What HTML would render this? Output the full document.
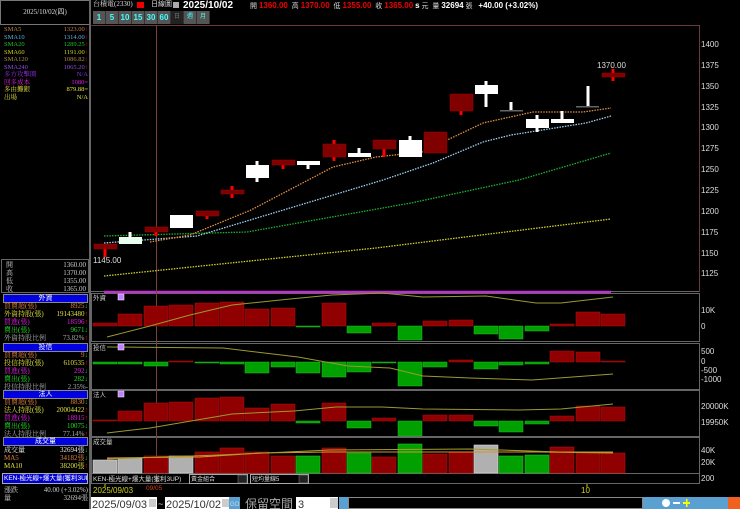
<!DOCTYPE html>
<html><head><meta charset="utf-8">
<style>
*{margin:0;padding:0;box-sizing:border-box}
body{width:740px;height:509px;background:#000;overflow:hidden;position:relative;font-family:"Liberation Sans","Noto Sans CJK TC",sans-serif;font-size:7px;color:#ddd}
.a{position:absolute;white-space:nowrap;line-height:9px}
.r{position:absolute;left:4px;right:2px;height:8px;font-size:7px;line-height:8px;font-family:"Liberation Serif","Noto Serif CJK SC",serif;white-space:nowrap}
.r span{position:absolute;right:0}
.m .r{height:7.5px;line-height:7.5px;font-size:6.5px}
.hd{position:absolute;left:3px;width:85px;height:9px;background:#0000e0;border:1px solid #888;color:#fff;text-align:center;font-size:7px;line-height:8px}
.box{position:absolute;left:1px;width:88px;border:1px solid #666}
.btn{position:absolute;top:11px;height:13px;width:13px;background:#555;color:#4ff;font-weight:bold;font-size:8px;line-height:13px;text-align:center;border-right:1px solid #333}
svg text{font-family:"Liberation Sans","Noto Sans CJK TC",sans-serif}
</style></head><body>
<!-- left panel -->
<div class="a" style="left:0;top:0;width:90px;height:25px;border:1px solid #777;text-align:center;line-height:23px;font-family:'Liberation Serif',serif;font-size:7px;color:#ddd">2025/10/02(四)</div>
<div style="position:absolute;left:89px;top:0;width:2px;height:509px;background:#666"></div>
<div class="m" style="position:absolute;left:0;top:26px;width:90px">
<div class="r" style="top:0;color:#c08040">SMA5<span>1323.00<b style="color:#f00">↑</b></span></div>
<div class="r" style="top:7.5px;color:#60b0e0">SMA10<span>1314.00<b style="color:#f00">↑</b></span></div>
<div class="r" style="top:15px;color:#20c020">SMA20<span>1289.25<b style="color:#f00">↑</b></span></div>
<div class="r" style="top:22.5px;color:#d0d020">SMA60<span>1191.00<b style="color:#f00">↑</b></span></div>
<div class="r" style="top:30px;color:#b08850">SMA120<span>1086.82<b style="color:#f00">↑</b></span></div>
<div class="r" style="top:37.5px;color:#9050e0">SMA240<span>1065.20<b style="color:#f00">↑</b></span></div>
<div class="r" style="top:45px;color:#9030e0">多方攻擊圈<span>N/A</span></div>
<div class="r" style="top:52.5px;color:#e020e0">回多成本<span>1080=</span></div>
<div class="r" style="top:60px;color:#e0e040">多由攤銀<span>879.88=</span></div>
<div class="r" style="top:67.5px;color:#e0e040">出場<span>N/A</span></div>
</div>
<div class="box" style="top:259px;height:34px">
<div class="r" style="top:1px;color:#ccc">開<span>1360.00</span></div>
<div class="r" style="top:9px;color:#ccc">高<span>1370.00</span></div>
<div class="r" style="top:17px;color:#ccc">低<span>1355.00</span></div>
<div class="r" style="top:25px;color:#ccc">收<span>1365.00</span></div>
</div>
<div class="hd" style="top:294px">外資</div>
<div style="position:absolute;left:0;top:302px;width:90px">
<div class="r" style="top:0;color:#e08040">買賣超(張)<span>8925<b style="color:#0c0">↓</b></span></div>
<div class="r" style="top:8px;color:#e0e040">外資持股(張)<span>19143480<b style="color:#f00">↑</b></span></div>
<div class="r" style="top:16px;color:#e020e0">買進(張)<span>18596<b style="color:#f00">↑</b></span></div>
<div class="r" style="top:24px;color:#20e020">賣出(張)<span>9671<b style="color:#0c0">↓</b></span></div>
<div class="r" style="top:32px;color:#aaa">外資持股比例<span>73.82%<b style="color:#f00">↑</b></span></div>
</div>
<div class="hd" style="top:343px">投信</div>
<div style="position:absolute;left:0;top:351px;width:90px">
<div class="r" style="top:0;color:#e08040">買賣超(張)<span>9<b style="color:#0c0">↓</b></span></div>
<div class="r" style="top:8px;color:#e0e040">投信持股(張)<span>610535<b style="color:#f00">↑</b></span></div>
<div class="r" style="top:16px;color:#e020e0">買進(張)<span>292<b style="color:#0c0">↓</b></span></div>
<div class="r" style="top:24px;color:#20e020">賣出(張)<span>282<b style="color:#0c0">↓</b></span></div>
<div class="r" style="top:32px;color:#aaa">投信持股比例<span>2.35%-</span></div>
</div>
<div class="hd" style="top:390px">法人</div>
<div style="position:absolute;left:0;top:398px;width:90px">
<div class="r" style="top:0;color:#e08040">買賣超(張)<span>8830<b style="color:#0c0">↓</b></span></div>
<div class="r" style="top:8px;color:#e0e040">法人持股(張)<span>20004422<b style="color:#f00">↑</b></span></div>
<div class="r" style="top:16px;color:#e020e0">買進(張)<span>18915<b style="color:#f00">↑</b></span></div>
<div class="r" style="top:24px;color:#20e020">賣出(張)<span>10075<b style="color:#0c0">↓</b></span></div>
<div class="r" style="top:32px;color:#aaa">法人持股比例<span>77.14%<b style="color:#f00">↑</b></span></div>
</div>
<div class="hd" style="top:437px">成交量</div>
<div style="position:absolute;left:0;top:446px;width:90px">
<div class="r" style="top:0;color:#eee">成交量<span>32694張<b style="color:#0c0">↓</b></span></div>
<div class="r" style="top:8px;color:#e08040">MA5<span>34182張<b style="color:#0c0">↓</b></span></div>
<div class="r" style="top:16px;color:#e0e040">MA10<span>38200張<b style="color:#f00">↑</b></span></div>
</div>
<div class="a" style="left:2px;top:473px;width:86px;height:11px;background:#0000d0;border:1px solid #aaa;color:#fff;font-size:6.5px;line-height:9px;padding-left:1px;overflow:hidden">KEN-極光線+爆大量(獲利3UP)</div>
<div style="position:absolute;left:0;top:486px;width:90px">
<div class="r" style="top:0;color:#ccc">漲跌<span>40.00 (+3.02%)</span></div>
<div class="r" style="top:8px;color:#ccc">量<span>32694張</span></div>
</div>

<!-- top bar -->
<div class="a" style="left:93px;top:0;font-size:7px;color:#ddd;font-family:'Liberation Serif','Noto Serif CJK SC',serif">台積電(2330)</div>
<div style="position:absolute;left:137px;top:2px;width:7px;height:6px;background:#e00"></div>
<div class="a" style="left:151px;top:0;font-size:7px;color:#ddd">日線圖</div>
<div style="position:absolute;left:173px;top:2px;width:6px;height:6px;background:#aaa"></div>
<div class="a" style="left:183px;top:0;font-size:10px;font-weight:bold;color:#fff;line-height:11px">2025/10/02</div>
<div class="a" style="left:250px;top:0;font-size:7px;color:#ddd;line-height:11px">開 <b style="color:#e00;font-size:8px">1360.00</b> &nbsp;高 <b style="color:#e00;font-size:8px">1370.00</b> &nbsp;低 <b style="color:#e00;font-size:8px">1355.00</b> &nbsp;收 <b style="color:#e00;font-size:8px">1365.00</b> <b style="font-size:8px;color:#fff">s</b> 元 &nbsp;量 <b style="color:#fff;font-size:8px">32694</b> 張 &nbsp;&nbsp;<b style="color:#fff;font-size:8px">+40.00 (+3.02%)</b></div>
<div class="btn" style="left:93px">1</div><div class="btn" style="left:106px">5</div><div class="btn" style="left:119px">10</div><div class="btn" style="left:132px">15</div><div class="btn" style="left:145px">30</div><div class="btn" style="left:158px">60</div><div class="btn" style="left:171px;background:#222;color:#777;font-weight:normal;font-size:6px">日</div><div class="btn" style="left:184px;font-weight:normal;font-size:6px">週</div><div class="btn" style="left:197px;font-weight:normal;font-size:6px">月</div>

<svg width="740" height="509" style="position:absolute;left:0;top:0" xmlns="http://www.w3.org/2000/svg">
<g fill="none" stroke="#6b3a3a" stroke-width="1">
<path d="M91.5 25.5H699.5V292"/>
</g>
<g stroke="#666" fill="none"><rect x="91.5" y="293.5" width="608" height="48"/><rect x="91.5" y="343.5" width="608" height="46"/><rect x="91.5" y="390.5" width="608" height="46"/><rect x="91.5" y="437.5" width="608" height="36"/><rect x="91.5" y="473.5" width="608" height="10"/></g>
<line x1="91" y1="291.5" x2="699" y2="291.5" stroke="#666"/>
<line x1="104" y1="292" x2="611" y2="292" stroke="#c030d0" stroke-width="2.5"/>
<g fill="#ddd" font-size="8">
<text x="701" y="47">1400</text><text x="701" y="68">1375</text><text x="701" y="89">1350</text><text x="701" y="110">1325</text><text x="701" y="130">1300</text><text x="701" y="151">1275</text><text x="701" y="172">1250</text><text x="701" y="193">1225</text><text x="701" y="214">1200</text><text x="701" y="235">1175</text><text x="701" y="256">1150</text><text x="701" y="276">1125</text>
<text x="701" y="313">10K</text><text x="701" y="329">0</text>
<text x="701" y="354">500</text><text x="701" y="364">0</text><text x="701" y="373">-500</text><text x="701" y="382">-1000</text>
<text x="701" y="409">20000K</text><text x="701" y="425">19950K</text>
<text x="701" y="453">40K</text><text x="701" y="465">20K</text><text x="701" y="481">200</text>
<text x="93" y="263">1145.00</text><text x="597" y="68">1370.00</text>
</g>
<line x1="156.5" y1="26" x2="156.5" y2="484" stroke="#7a4030"/>
<g fill="none" stroke-width="1.3" stroke-dasharray="1.5 1.2">
<polyline stroke="#d0d030" points="104,276 376,248 611,219"/>
<polyline stroke="#20b030" points="104,236 247,232 411,203 519,180 611,153"/>
<polyline stroke="#a0d0f0" points="104,243 197,236 383,180 433,163 483,142 511,135 586,123 611,116"/>
<polyline stroke="#e09040" points="150,242 190,235 251,210 333,167 376,157 422,152 483,123 533,112 583,112 611,108"/>
</g>
<g stroke="#f00" stroke-width="3">
<line x1="105" y1="244" x2="105" y2="257"/><line x1="156" y1="227" x2="156" y2="236"/><line x1="207" y1="211" x2="207" y2="219"/><line x1="232" y1="186" x2="232" y2="198"/><line x1="283" y1="160" x2="283" y2="169"/><line x1="334" y1="140" x2="334" y2="161"/><line x1="384" y1="140" x2="384" y2="157"/><line x1="461" y1="94" x2="461" y2="115"/><line x1="613" y1="69" x2="613" y2="81"/>
</g>
<g stroke="#fff" stroke-width="3">
<line x1="130" y1="232" x2="130" y2="244"/><line x1="181" y1="215" x2="181" y2="228"/><line x1="257" y1="161" x2="257" y2="182"/><line x1="308" y1="161" x2="308" y2="169"/><line x1="359" y1="148" x2="359" y2="157"/><line x1="410" y1="136" x2="410" y2="157"/><line x1="486" y1="81" x2="486" y2="107"/><line x1="511" y1="102" x2="511" y2="111"/><line x1="537" y1="115" x2="537" y2="132"/><line x1="562" y1="111" x2="562" y2="123"/><line x1="588" y1="86" x2="588" y2="107"/>
</g>
<g fill="#800000" stroke="#a00000" stroke-width=".5">
<rect x="94" y="244" width="23" height="5"/><rect x="145" y="227" width="23" height="5"/><rect x="196" y="211" width="23" height="5"/><rect x="221" y="190" width="23" height="4"/><rect x="272" y="160" width="23" height="5"/><rect x="323" y="144" width="23" height="13"/><rect x="373" y="140" width="23" height="9"/><rect x="424" y="132" width="23" height="21"/><rect x="450" y="94" width="23" height="17"/><rect x="602" y="73" width="23" height="4"/>
</g>
<g fill="#fff">
<rect x="119" y="237" width="23" height="7" fill="#e8fff0"/><rect x="170" y="215" width="23" height="13"/><rect x="246" y="165" width="23" height="13"/><rect x="297" y="161" width="23" height="4"/><rect x="348" y="153" width="23" height="4"/><rect x="399" y="140" width="23" height="17"/><rect x="475" y="85" width="23" height="9"/><rect x="526" y="119" width="23" height="9"/><rect x="551" y="119" width="23" height="4"/>
</g>
<g fill="#666"><rect x="500" y="110" width="23" height="1.5"/><rect x="576" y="106" width="23" height="1.5"/></g>
<g fill="#900000" stroke="#b01010" stroke-width=".5">
<rect x="93" y="323" width="24" height="3"/><rect x="118" y="314" width="24" height="12"/><rect x="144" y="306" width="24" height="20"/><rect x="169" y="305" width="24" height="21"/><rect x="195" y="303" width="24" height="23"/><rect x="220" y="302" width="24" height="24"/><rect x="245" y="309" width="24" height="17"/><rect x="271" y="308" width="24" height="18"/><rect x="322" y="303" width="24" height="23"/><rect x="372" y="323" width="24" height="3"/><rect x="423" y="321" width="24" height="5"/><rect x="449" y="320" width="24" height="6"/><rect x="550" y="324" width="24" height="2"/><rect x="576" y="312" width="24" height="14"/><rect x="601" y="314" width="24" height="12"/>
</g>
<g fill="#00a000" stroke="#20c020" stroke-width=".5">
<rect x="296" y="326" width="24" height="1"/><rect x="347" y="326" width="24" height="7"/><rect x="398" y="326" width="24" height="14"/><rect x="474" y="326" width="24" height="8"/><rect x="499" y="326" width="24" height="13"/><rect x="525" y="326" width="24" height="5"/>
</g>
<polyline fill="none" stroke="#9a9a30" points="107,337 150,326 190,315 232,305 290,299 332,295 382,293 423,297 486,296 536,303 561,303 613,297"/>
<g fill="#00a000" stroke="#20c020" stroke-width=".5">
<rect x="93" y="362" width="24" height="2"/><rect x="118" y="362" width="24" height="2"/><rect x="144" y="362" width="24" height="4"/><rect x="195" y="362" width="24" height="1"/><rect x="220" y="362" width="24" height="2"/><rect x="245" y="362" width="24" height="11"/><rect x="271" y="362" width="24" height="5"/><rect x="296" y="362" width="24" height="11"/><rect x="322" y="362" width="24" height="15"/><rect x="347" y="362" width="24" height="10"/><rect x="372" y="362" width="24" height="1"/><rect x="398" y="362" width="24" height="24"/><rect x="423" y="362" width="24" height="5"/><rect x="474" y="362" width="24" height="7"/><rect x="499" y="362" width="24" height="3"/><rect x="525" y="362" width="24" height="2"/>
</g>
<g fill="#900000" stroke="#b01010" stroke-width=".5">
<rect x="169" y="361" width="24" height="1"/><rect x="449" y="360" width="24" height="2"/><rect x="550" y="351" width="24" height="11"/><rect x="576" y="352" width="24" height="10"/><rect x="601" y="361" width="24" height="1"/>
</g>
<polyline fill="none" stroke="#9a9a30" points="107,347 223,348 298,357 348,366 390,368 423,376 470,378 532,380 613,374"/>
<g fill="#900000" stroke="#b01010" stroke-width=".5">
<rect x="93" y="420" width="24" height="1"/><rect x="118" y="411" width="24" height="10"/><rect x="144" y="403" width="24" height="18"/><rect x="169" y="402" width="24" height="19"/><rect x="195" y="398" width="24" height="23"/><rect x="220" y="397" width="24" height="24"/><rect x="245" y="408" width="24" height="13"/><rect x="271" y="404" width="24" height="17"/><rect x="322" y="403" width="24" height="18"/><rect x="372" y="418" width="24" height="3"/><rect x="423" y="415" width="24" height="6"/><rect x="449" y="415" width="24" height="6"/><rect x="550" y="416" width="24" height="5"/><rect x="576" y="406" width="24" height="15"/><rect x="601" y="407" width="24" height="14"/>
</g>
<g fill="#00a000" stroke="#20c020" stroke-width=".5">
<rect x="296" y="421" width="24" height="2"/><rect x="347" y="421" width="24" height="7"/><rect x="398" y="421" width="24" height="15"/><rect x="474" y="421" width="24" height="5"/><rect x="499" y="421" width="24" height="11"/><rect x="525" y="421" width="24" height="3"/>
</g>
<polyline fill="none" stroke="#9a9a30" points="107,433 150,428 232,414 294,411 336,407 382,407 423,409 519,410 561,409 613,404"/>
<g stroke-width=".6">
<rect x="93" y="460" width="24" height="13" fill="#b0b0b0" stroke="#ddd"/><rect x="118" y="458" width="24" height="15" fill="#b0b0b0" stroke="#ddd"/><rect x="144" y="456" width="24" height="17" fill="#900000" stroke="#b01010"/><rect x="169" y="456" width="24" height="17" fill="#b0b0b0" stroke="#ddd"/><rect x="195" y="452" width="24" height="21" fill="#900000" stroke="#b01010"/><rect x="220" y="448" width="24" height="25" fill="#900000" stroke="#b01010"/><rect x="245" y="452" width="24" height="21" fill="#900000" stroke="#b01010"/><rect x="271" y="456" width="24" height="17" fill="#900000" stroke="#b01010"/><rect x="296" y="456" width="24" height="17" fill="#00a000" stroke="#20c020"/><rect x="322" y="448" width="24" height="25" fill="#900000" stroke="#b01010"/><rect x="347" y="453" width="24" height="20" fill="#00a000" stroke="#20c020"/><rect x="372" y="457" width="24" height="16" fill="#900000" stroke="#b01010"/><rect x="398" y="444" width="24" height="29" fill="#00a000" stroke="#20c020"/><rect x="423" y="454" width="24" height="19" fill="#900000" stroke="#b01010"/><rect x="449" y="452" width="24" height="21" fill="#900000" stroke="#b01010"/><rect x="474" y="445" width="24" height="28" fill="#b0b0b0" stroke="#ddd"/><rect x="499" y="456" width="24" height="17" fill="#00a000" stroke="#20c020"/><rect x="525" y="455" width="24" height="18" fill="#00a000" stroke="#20c020"/><rect x="550" y="447" width="24" height="26" fill="#900000" stroke="#b01010"/><rect x="576" y="452" width="24" height="21" fill="#900000" stroke="#b01010"/><rect x="601" y="453" width="24" height="20" fill="#900000" stroke="#b01010"/>
</g>
<polyline fill="none" stroke="#e09030" points="107,458 200,457 260,453 330,452 400,452 470,452 540,452 613,453"/>
<polyline fill="none" stroke="#a0a030" points="107,459 220,455 330,450 470,449 560,452 613,452"/>
<g fill="#ccc" font-size="6.5"><text x="93" y="300">外資</text><text x="93" y="350">投信</text><text x="93" y="397">法人</text><text x="93" y="444">成交量</text></g>
<g fill="#c080ff" stroke="#fff" stroke-width=".5"><rect x="118" y="294" width="6" height="6"/><rect x="118" y="344" width="6" height="6"/><rect x="118" y="391" width="6" height="6"/></g>
<text x="93" y="481" fill="#ddd" font-size="6.5">KEN-極光線+爆大量(獲利3UP)</text>
<rect x="189.5" y="474.5" width="58" height="9" fill="#000" stroke="#aaa"/><text x="191" y="481" fill="#ddd" font-size="6">黃金組合</text><rect x="238" y="475" width="9" height="8" fill="#222" stroke="#888" stroke-width=".5"/>
<rect x="250.5" y="474.5" width="58" height="9" fill="#000" stroke="#aaa"/><text x="252" y="481" fill="#ddd" font-size="6">短均量線5</text><rect x="299" y="475" width="9" height="8" fill="#222" stroke="#888" stroke-width=".5"/>
<line x1="105" y1="484" x2="105" y2="487" stroke="#cc0"/><line x1="587" y1="484" x2="587" y2="487" stroke="#cc0"/>
<text x="93" y="493" fill="#d0d020" font-size="8">2025/09/03</text>
<text x="146" y="490" fill="#d04020" font-size="6.5">09/05</text>
<text x="581" y="493" fill="#d0d020" font-size="8">10</text>
<rect x="91" y="497" width="66" height="12" fill="#fff"/><text x="92" y="508" fill="#333" font-size="11" font-family="Liberation Serif">2025/09/03</text>
<rect x="149" y="499" width="7" height="8" fill="#ccc"/>
<text x="158" y="507" fill="#ccc" font-size="9">~</text>
<rect x="165" y="497" width="66" height="12" fill="#fff"/><text x="166" y="508" fill="#333" font-size="11" font-family="Liberation Serif">2025/10/02</text>
<rect x="222" y="499" width="7" height="8" fill="#ccc"/>
<rect x="229" y="497" width="11" height="12" fill="#5aa0d0"/><text x="230" y="506" fill="#cde" font-size="6">GO</text>
<text x="245" y="508" fill="#aaa" font-size="12" font-family="Noto Serif CJK SC,serif">保留空間</text>
<rect x="296" y="497" width="42" height="12" fill="#fff"/><text x="298" y="508" fill="#333" font-size="11" font-family="Liberation Serif">3</text>
<rect x="330" y="498" width="8" height="10" fill="#ccc"/>
<rect x="339" y="497" width="10" height="12" fill="#5aa0d0"/>
<rect x="348.5" y="497.5" width="294" height="11" fill="#000" stroke="#888"/>
<rect x="643" y="497" width="97" height="12" fill="#5aa0d0"/>
<rect x="728" y="497" width="12" height="12" fill="#f06020"/>
<g fill="#fff"><circle cx="666" cy="503" r="4"/><rect x="673" y="502" width="7" height="2"/><rect x="683" y="502" width="7" height="2" fill="#ff0"/><rect x="686" y="499" width="1.5" height="8" fill="#ff0"/></g>
</svg>
</body></html>
